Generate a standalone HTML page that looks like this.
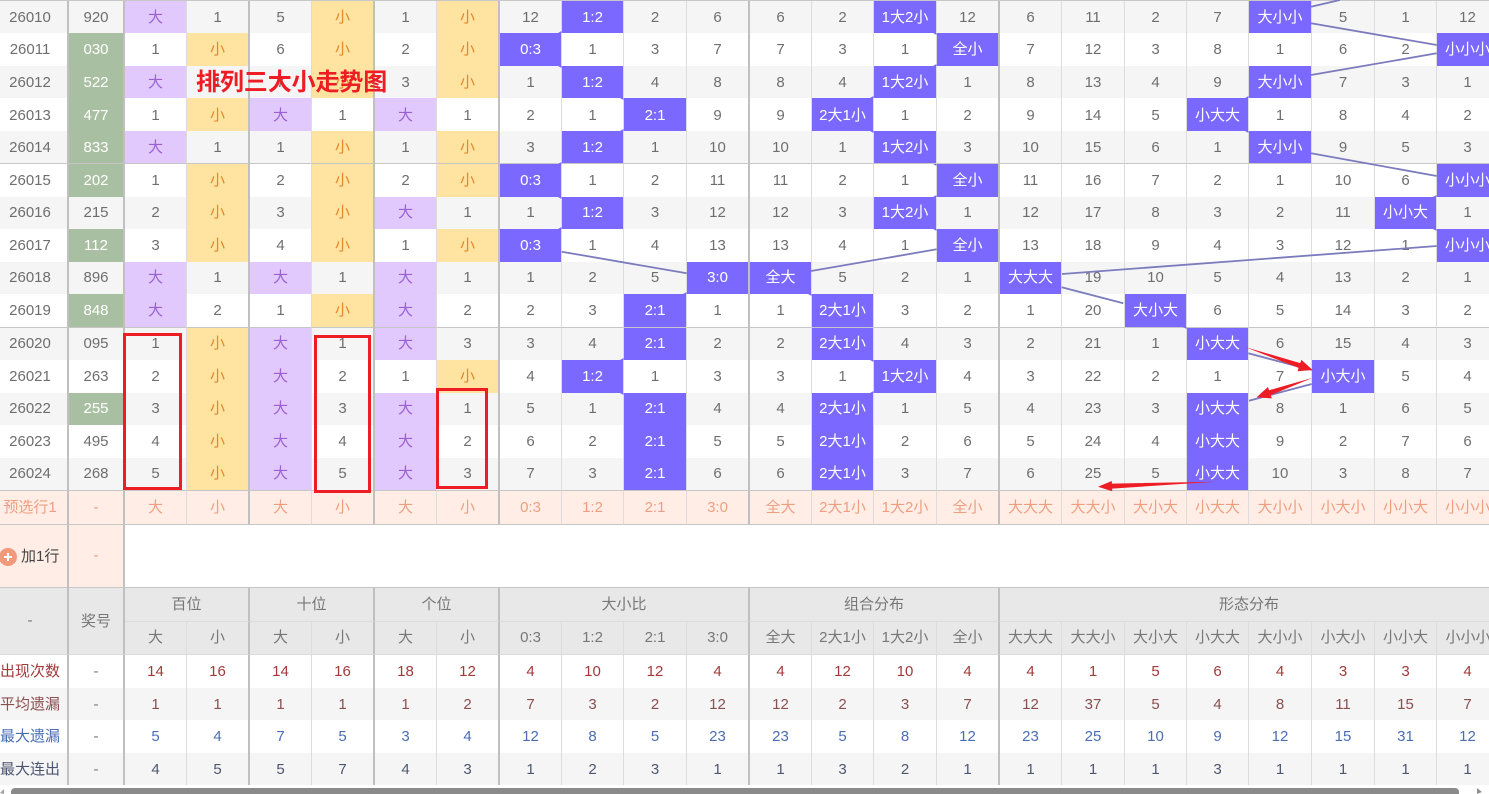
<!DOCTYPE html>
<html lang="zh"><head><meta charset="utf-8"><title>排列三大小走势图</title>
<style>
html,body{margin:0;padding:0;background:#fff}
#w{position:relative;width:1489px;height:794px;overflow:hidden;font:15px "Liberation Sans","Noto Sans CJK SC",sans-serif;color:#6e6e6e}
#l{position:absolute;left:0;top:0;width:1489px;height:1px;background:#c8c8c8}
table{position:absolute;left:0;top:1px;width:1500px;table-layout:fixed;border-collapse:separate;border-spacing:0}
td{box-sizing:border-box;padding:0;text-align:center;vertical-align:middle;white-space:nowrap;overflow:hidden;line-height:16px;border-right:1px solid #dcdcdc}
tr.u td{padding-top:2px}
tr:nth-child(odd) td{background:#f5f5f5}
tr:nth-child(even) td{background:#fff}
.r td:nth-child(1),.r td:nth-child(2),.r td:nth-child(4),.r td:nth-child(6),.r td:nth-child(8),.r td:nth-child(12),.r td:nth-child(16),.r td:nth-child(24),td.t{border-right:2px solid #c0c0c0}
.r td:nth-child(1){padding-right:7px}
.b td{border-bottom:1px solid #c6c6c6}
tr td.p{background:#e1c8fd;color:#9a60d2}
tr td.o{background:#ffe3a1;color:#e3872c}
tr td.g{background:#a8c0a1;color:#fff}
tr td.v{background:#7a68ff;color:#fff}
tr.k td{background:#ffede6;color:#ee9f80}
tr.h td{background:#e8e8e8;color:#777;border-bottom:1px solid #dcdcdc}
tr.h td.f{border-bottom:1px solid #dcdcdc}
tr.s1 td{color:#a23a3a}
tr.s2 td{color:#8a4f4f}
tr.s3 td{color:#4a6db3}
tr.s4 td{color:#4d5670}
tr.s1 td:nth-child(2),tr.s2 td:nth-child(2),tr.s3 td:nth-child(2),tr.s4 td:nth-child(2){color:#777}
#a{position:absolute;left:-1px;top:548px;width:18px;height:18px;border-radius:50%;background:#f19a7b;color:#fff}
#a:before{content:"";position:absolute;left:5px;top:8px;width:8px;height:2px;background:#fff}
#a:after{content:"";position:absolute;left:8px;top:5px;width:2px;height:8px;background:#fff}
#at{position:absolute;left:21px;top:548px;color:#444;line-height:18px}
#tt{position:absolute;left:196px;top:65px;font:bold 24px/30px "Noto Sans CJK SC",sans-serif;color:#ee1c25;letter-spacing:-.1px}
.bx{position:absolute;box-sizing:border-box;border:3px solid #ee1c25}
svg{position:absolute;left:0;top:0}
#th{position:absolute;left:11px;top:788px;width:1448px;height:6px;background:#8a8a8a;border-radius:4px 4px 0 0}
#la{position:absolute;left:0;top:789px;width:0;height:0;border-right:4px solid #a0a0a0;border-top:4px solid transparent;border-bottom:1px solid transparent}
#ra{position:absolute;left:1477px;top:788px;width:0;height:0;border-left:5px solid #909090;border-top:4px solid transparent;border-bottom:2px solid transparent}
</style></head><body><div id="w"><div id="l"></div>
<table><colgroup><col style="width:69px"><col style="width:56px"><col style="width:62px"><col style="width:63px"><col style="width:62px"><col style="width:63px"><col style="width:62px"><col style="width:63px"><col style="width:62px"><col style="width:62px"><col style="width:63px"><col style="width:63px"><col style="width:62px"><col style="width:62px"><col style="width:63px"><col style="width:63px"><col style="width:62px"><col style="width:63px"><col style="width:62px"><col style="width:62px"><col style="width:63px"><col style="width:63px"><col style="width:62px"><col style="width:63px"></colgroup>
<tbody>
<tr class="r u" style="height:32px"><td>26010<td>920<td class="p">大<td>1<td>5<td class="o">小<td>1<td class="o">小<td>12<td class="v">1:2<td>2<td>6<td>6<td>2<td class="v">1大2小<td>12<td>6<td>11<td>2<td>7<td class="v">大小小<td>5<td>1<td>12</tr>
<tr class="r" style="height:33px"><td>26011<td class="g">030<td>1<td class="o">小<td>6<td class="o">小<td>2<td class="o">小<td class="v">0:3<td>1<td>3<td>7<td>7<td>3<td>1<td class="v">全小<td>7<td>12<td>3<td>8<td>1<td>6<td>2<td class="v">小小小</tr>
<tr class="r u" style="height:32px"><td>26012<td class="g">522<td class="p">大<td>1<td>7<td class="o">小<td>3<td class="o">小<td>1<td class="v">1:2<td>4<td>8<td>8<td>4<td class="v">1大2小<td>1<td>8<td>13<td>4<td>9<td class="v">大小小<td>7<td>3<td>1</tr>
<tr class="r u" style="height:33px"><td>26013<td class="g">477<td>1<td class="o">小<td class="p">大<td>1<td class="p">大<td>1<td>2<td>1<td class="v">2:1<td>9<td>9<td class="v">2大1小<td>1<td>2<td>9<td>14<td>5<td class="v">小大大<td>1<td>8<td>4<td>2</tr>
<tr class="r b u" style="height:33px"><td>26014<td class="g">833<td class="p">大<td>1<td>1<td class="o">小<td>1<td class="o">小<td>3<td class="v">1:2<td>1<td>10<td>10<td>1<td class="v">1大2小<td>3<td>10<td>15<td>6<td>1<td class="v">大小小<td>9<td>5<td>3</tr>
<tr class="r" style="height:33px"><td>26015<td class="g">202<td>1<td class="o">小<td>2<td class="o">小<td>2<td class="o">小<td class="v">0:3<td>1<td>2<td>11<td>11<td>2<td>1<td class="v">全小<td>11<td>16<td>7<td>2<td>1<td>10<td>6<td class="v">小小小</tr>
<tr class="r" style="height:32px"><td>26016<td>215<td>2<td class="o">小<td>3<td class="o">小<td class="p">大<td>1<td>1<td class="v">1:2<td>3<td>12<td>12<td>3<td class="v">1大2小<td>1<td>12<td>17<td>8<td>3<td>2<td>11<td class="v">小小大<td>1</tr>
<tr class="r" style="height:33px"><td>26017<td class="g">112<td>3<td class="o">小<td>4<td class="o">小<td>1<td class="o">小<td class="v">0:3<td>1<td>4<td>13<td>13<td>4<td>1<td class="v">全小<td>13<td>18<td>9<td>4<td>3<td>12<td>1<td class="v">小小小</tr>
<tr class="r" style="height:32px"><td>26018<td>896<td class="p">大<td>1<td class="p">大<td>1<td class="p">大<td>1<td>1<td>2<td>5<td class="v">3:0<td class="v">全大<td>5<td>2<td>1<td class="v">大大大<td>19<td>10<td>5<td>4<td>13<td>2<td>1</tr>
<tr class="r b" style="height:34px"><td>26019<td class="g">848<td class="p">大<td>2<td>1<td class="o">小<td class="p">大<td>2<td>2<td>3<td class="v">2:1<td>1<td>1<td class="v">2大1小<td>3<td>2<td>1<td>20<td class="v">大小大<td>6<td>5<td>14<td>3<td>2</tr>
<tr class="r" style="height:32px"><td>26020<td>095<td>1<td class="o">小<td class="p">大<td>1<td class="p">大<td>3<td>3<td>4<td class="v">2:1<td>2<td>2<td class="v">2大1小<td>4<td>3<td>2<td>21<td>1<td class="v">小大大<td>6<td>15<td>4<td>3</tr>
<tr class="r" style="height:33px"><td>26021<td>263<td>2<td class="o">小<td class="p">大<td>2<td>1<td class="o">小<td>4<td class="v">1:2<td>1<td>3<td>3<td>1<td class="v">1大2小<td>4<td>3<td>22<td>2<td>1<td>7<td class="v">小大小<td>5<td>4</tr>
<tr class="r" style="height:32px"><td>26022<td class="g">255<td>3<td class="o">小<td class="p">大<td>3<td class="p">大<td>1<td>5<td>1<td class="v">2:1<td>4<td>4<td class="v">2大1小<td>1<td>5<td>4<td>23<td>3<td class="v">小大大<td>8<td>1<td>6<td>5</tr>
<tr class="r" style="height:33px"><td>26023<td>495<td>4<td class="o">小<td class="p">大<td>4<td class="p">大<td>2<td>6<td>2<td class="v">2:1<td>5<td>5<td class="v">2大1小<td>2<td>6<td>5<td>24<td>4<td class="v">小大大<td>9<td>2<td>7<td>6</tr>
<tr class="r b" style="height:33px"><td>26024<td>268<td>5<td class="o">小<td class="p">大<td>5<td class="p">大<td>3<td>7<td>3<td class="v">2:1<td>6<td>6<td class="v">2大1小<td>3<td>7<td>6<td>25<td>5<td class="v">小大大<td>10<td>3<td>8<td>7</tr>
<tr class="r b k" style="height:34px"><td>预选行1<td>-<td>大<td>小<td>大<td>小<td>大<td>小<td>0:3<td>1:2<td>2:1<td>3:0<td>全大<td>2大1小<td>1大2小<td>全小<td>大大大<td>大大小<td>大小大<td>小大大<td>大小小<td>小大小<td>小小大<td>小小小</tr>
<tr class="b k" style="height:63px"><td class="t"></td><td class="t">-</td><td colspan="22" style="background:#fff;border-right:0"></td></tr>
<tr class="h" style="height:34px"><td class="t" rowspan="2" style="padding-right:7px">-</td><td class="t" rowspan="2" style="padding-top:2px">奖号</td><td colspan="2" class="t">百位</td><td colspan="2" class="t">十位</td><td colspan="2" class="t">个位</td><td colspan="4" class="t">大小比</td><td colspan="4" class="t">组合分布</td><td colspan="8" class="t">形态分布</td></tr>
<tr class="h" style="height:33px"><td>大<td class="t">小<td>大<td class="t">小<td>大<td class="t">小<td>0:3<td>1:2<td>2:1<td class="t">3:0<td>全大<td>2大1小<td>1大2小<td class="t">全小<td>大大大<td>大大小<td>大小大<td>小大大<td>大小小<td>小大小<td>小小大<td>小小小</tr>
<tr class="r s1" style="height:33px"><td>出现次数<td>-<td>14<td>16<td>14<td>16<td>18<td>12<td>4<td>10<td>12<td>4<td>4<td>12<td>10<td>4<td>4<td>1<td>5<td>6<td>4<td>3<td>3<td>4</tr>
<tr class="r s2 u" style="height:32px"><td>平均遗漏<td>-<td>1<td>1<td>1<td>1<td>1<td>2<td>7<td>3<td>2<td>12<td>12<td>2<td>3<td>7<td>12<td>37<td>5<td>4<td>8<td>11<td>15<td>7</tr>
<tr class="r s3" style="height:33px"><td>最大遗漏<td>-<td>5<td>4<td>7<td>5<td>3<td>4<td>12<td>8<td>5<td>23<td>23<td>5<td>8<td>12<td>23<td>25<td>10<td>9<td>12<td>15<td>31<td>12</tr>
<tr class="r s4 u" style="height:32px"><td>最大连出<td>-<td>4<td>5<td>5<td>7<td>4<td>3<td>1<td>2<td>3<td>1<td>1<td>3<td>2<td>1<td>1<td>1<td>1<td>3<td>1<td>1<td>1<td>1</tr>
</tbody></table>
<svg width="1489" height="794" viewBox="0 0 1489 794">
<path fill="none" stroke="#7b7bbd" stroke-width="1.8" d="M561.7 251.7L686.7 273.3M936.7 249.3L811 271M1311 6.7L1340 0M1311 23.3L1436.7 45M1436.7 53.3L1311 75M1311 153.3L1436.7 176M1436.7 246L1062 274M1061.7 287.3L1123.3 303.3M1248.3 353.3L1311.7 370M1311.7 384L1249 400.7"/>
<path fill="#7a68ff" d="M558 33h3.5v-2zM558 66h3.5v2zM558 164h3.5v-2zM558 197h3.5v2zM558 229h3.5v-2zM620 98h3.5v2zM620 131h3.5v-2zM620 360h3.5v-2zM620 393h3.5v2zM683 294h3.5v-2zM933 33h3.5v2zM933 66h3.5v-2zM933 164h3.5v2zM933 197h3.5v-2zM933 229h3.5v2zM870 98h3.5v-2zM870 131h3.5v2zM870 360h3.5v2zM870 393h3.5v-2zM808 294h3.5v2zM1245 98h3.5v-2zM1245 131h3.5v2zM1433 197h3.5v-2zM1433 229h3.5v2zM1183 327h3.5v2z"/>
<g fill="#ee1c25"><polygon points="1245,347 1300.2,363.1 1301.3,359.8 1312.7,370 1297.5,371.2 1298.6,367.9"/><polygon points="1313,377.7 1269.1,390.3 1267.9,387 1256.7,397.3 1271.9,398.4 1270.7,395.1"/><polygon points="1215,481.7 1111.9,483.6 1111.8,481 1098,486.7 1112.2,491.2 1112.1,488.6"/></g>
</svg>
<div class="bx" style="left:123px;top:333px;width:59px;height:157px"></div>
<div class="bx" style="left:314px;top:335px;width:57px;height:158px"></div>
<div class="bx" style="left:436px;top:388px;width:52px;height:101px"></div>
<div id="tt">排列三大小走势图</div>
<div id="a"></div><div id="at">加1行</div>
<div id="la"></div><div id="th"></div><div id="ra"></div>
</div></body></html>
